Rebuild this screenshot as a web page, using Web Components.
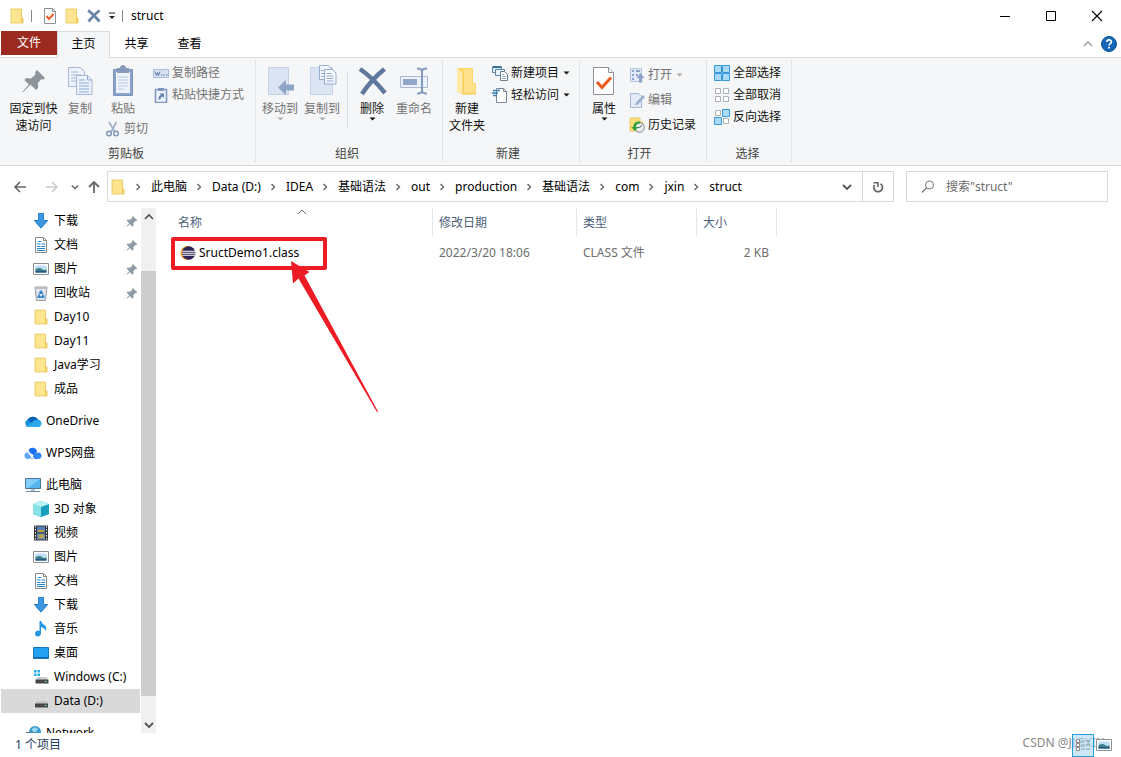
<!DOCTYPE html>
<html lang="zh-CN">
<head>
<meta charset="utf-8">
<title>struct</title>
<style>
  html, body { height: 100%; margin: 0; }
  body { font: 12px/16px "Noto Sans", "Noto Sans CJK SC", sans-serif; color: #000; background: #fff; overflow: hidden; }
</style>
</head>
<body>
<file-explorer></file-explorer>
<script>
const ICONS = {
  folder: [16, 16, '<path d="M2 1h9.500v10h2.500v4H2z" fill="#f6dc7c"/><path d="M2 1h11v14H2z" fill="#fde58f"/><path d="M12 10h2v5h-2z" fill="#f3cf57"/><path d="M2 1h10.500v9H14V15H2z" fill="none" stroke="#e6c458" stroke-width=".8"/>'],
  check: [16, 16, '<path d="M2.500.5h8l3 3v12h-11z" fill="#fff" stroke="#8a8f98"/><path d="M10.500.5v3h3" fill="none" stroke="#8a8f98"/><path d="M4.500 8l2.500 3 4.500-5" fill="none" stroke="#e4622a" stroke-width="2"/>'],
  cross: [16, 16, '<path d="M2 2.500Q6 5 13.500 13.500M13.500 2.500Q9 6 2.500 13.500" fill="none" stroke="#6d84a8" stroke-width="2.800"/>'],
  custom: [8, 8, '<path d="M1 1h6" stroke="#222"/><path d="M1 4h6L4 7z" fill="#222"/>'],
  tri: [7, 4, '<path d="M.5.5h6l-3 3z" fill="currentColor"/>'],
  min: [12, 12, '<path d="M1 6.500h10" stroke="#000"/>'],
  max: [12, 12, '<path d="M1.500 1.500h9v9h-9z" fill="none" stroke="#000"/>'],
  close: [12, 12, '<path d="M1 1l10 10M11 1L1 11" stroke="#000" stroke-width="1.100"/>'],
  up: [10, 10, '<path d="M1 7l4-4 4 4" fill="none" stroke="currentColor" stroke-width="1.600"/>'],
  down: [10, 10, '<path d="M1 3l4 4 4-4" fill="none" stroke="currentColor" stroke-width="1.800"/>'],
  sort: [10, 6, '<path d="M1 5l4-4 4 4" fill="none" stroke="#666"/>'],
  sep: [7, 8, '<path d="M1.500 1l3 3-3 3" fill="none" stroke="#666" stroke-width="1.400"/>'],
  help: [16, 16, '<circle cx="8" cy="8" r="7.500" fill="#1568b8" stroke="#0d509a"/><path d="M5.800 6.100c0-3 4.600-2.900 4.600-.2 0 1.800-2.300 1.700-2.300 3.600" fill="none" stroke="#fff" stroke-width="1.700"/><path d="M7.200 10.800h1.800v1.800H7.200z" fill="#fff"/>'],
  pinbig: [32, 32, '<path d="M19 5l8 8-1.800 1.700-1.700-.6-3.700 4.100.4 4.600-2.200 2.200-5.400-5.300-7.400 7.200L4 27.200l7-7.600-4.700-4.600 2-2 4.700.4 4.500-3.800-.4-2.500z" fill="#8d949b"/>'],
  copy: [32, 32, '<g fill="#eef3fb" stroke="#a5b6d6"><path d="M4.500 2.500h12l4 4v15h-16z"/><path d="M7 7h7M7 10h10M7 13h10M7 16h10"/><path d="M12.500 10.500h11l4.500 4.500v14.500H12.500z"/><path d="M23.500 10.500V15H28M15 15h6M15 18h10M15 21h10M15 24h10M15 27h10" fill="none" stroke="#8ea8d4"/></g>'],
  paste: [32, 32, '<path d="M6.500 4.500h19v26h-19z" fill="#8ba2c9" stroke="#7c93bb"/><path d="M9 7h14v21H9z" fill="#eef3fb"/><path d="M10 3h3c0-4 6-4 6 0h3v5H10z" fill="#8799b8"/><path d="M11 12h10M11 15h10M11 18h10M11 21h10M11 24h6" stroke="#bccae2"/>'],
  cut: [16, 16, '<path d="M4 1l6 10M11.500 1L6 11" stroke="#a0b0cc" stroke-width="1.600"/><circle cx="4" cy="12.500" r="2.300" fill="none" stroke="#8296ba" stroke-width="1.500"/><circle cx="11" cy="12.500" r="2.300" fill="none" stroke="#8296ba" stroke-width="1.500"/>'],
  path: [16, 16, '<path d="M.5 4.500h15v8H.5z" fill="#d8e3f4" stroke="#abbcd8"/><path d="M2 6.500l1.500 4 1-3 1 3 1.500-4" fill="none" stroke="#5c76a4"/><path d="M8 10h1.500M10.500 10H12M13 10h1.500" stroke="#5c76a4"/>'],
  shortcut: [16, 16, '<path d="M2.500 2.500h11v13h-11z" fill="#eef3fb" stroke="#8399c0" stroke-width="1.600"/><path d="M5 1h6v3H5z" fill="#8296ba"/><path d="M5.500 12.500c0-3 1-4 2.500-4.500L6.500 6.500H11V11L9.500 9.500c-1.500.5-2 1.500-2 3z" fill="#6480b2"/>'],
  moveto: [32, 32, '<path d="M4.500 2.500h20v27h-20z" fill="#dae4f2" stroke="#c5d2e7"/><path d="M14 22.500l8-7.500v4.500h8v6h-8V30z" fill="#8ea4c6"/>'],
  copyto: [32, 32, '<path d="M4.500 2.500h22v27h-22z" fill="#dae4f2" stroke="#c5d2e7"/><g fill="#f4f7fc" stroke="#96abd0"><path d="M13.500.5h9l3 3v11h-12z"/><path d="M18.500 4.500h8l3.500 3.500v11H18.500z"/><path d="M20.500 8.500h5M20.500 11h7M20.500 13.500h7M20.500 16h7M15 5.500h3M15 8.500h3M15 11.500h3"/></g>'],
  delete: [32, 32, '<path d="M4 4Q17 13 29 28M28.500 4Q15 15 6 29" fill="none" stroke="#60779d" stroke-width="4.500"/>'],
  rename: [32, 32, '<path d="M2.500 11.500h27v11h-27z" fill="#eef3fb" stroke="#a9b9d4"/><path d="M5 14h14v6H5z" fill="#90a6ca"/><path d="M19 3.500q5 0 5 3v19q0 3-5 3M29 3.500q-5 0-5 3v19q0 3 5 3" fill="none" stroke="#8298bd" stroke-width="2"/>'],
  newfolder: [32, 32, '<path d="M6 3h16v15h3v11H12z" fill="#fbd76b"/><path d="M13 4h8v15h3v9H13z" fill="#ffe08a"/><path d="M6 3l6 5v22l-6-3z" fill="#ffe9a6"/><path d="M12 8v21.500M12 29h13" fill="none" stroke="#f0c755"/>'],
  newitem: [16, 16, '<path d="M.5 1.500h9v6h-9z" fill="#d9edf8" stroke="#60849e"/><path d="M1 2h8" stroke="#397298" stroke-width="2"/><path d="M3.500 4.500h9v6h-9z" fill="#e8f4fb" stroke="#60849e"/><path d="M8.500 6.500h4l3 3v6h-7z" fill="#fff" stroke="#6c7d90"/><path d="M10 9.500h2M10 11.500h4M10 13.500h4" stroke="#9aacbe"/>'],
  easy: [16, 16, '<path d="M4.500 1.500h7l3 3v11h-10z" fill="#fff" stroke="#7a8796"/><path d="M11.500 1.500v3h3" fill="none" stroke="#7a8796"/><path d="M1 3.500h7M0 6h6M1 8.500h4" stroke="#397fb1" stroke-width="1.300"/>'],
  properties: [32, 32, '<path d="M5.500 2.500h15l5 5v22h-20z" fill="#fff" stroke="#8c9198"/><path d="M20.500 2.500v5h5" fill="#eee" stroke="#8c9198"/><path d="M9 17l5 5.500 9-10" fill="none" stroke="#eb5a1c" stroke-width="3"/>'],
  open: [16, 16, '<path d="M1.500 1.500h11v13h-11z" fill="#e2ebf7" stroke="#b6c5de"/><path d="M3 3h2v2H3zM3 7h2v2H3zM3 11h2v2H3zM7 3h4v2H7zM7 7h2v2H7z" fill="#8ba1c7"/><path d="M11.500 6l4 5h-2.300v4.500H10V11H7.500z" fill="#8ba1c7"/>'],
  edit: [16, 16, '<path d="M1.500 1.500h8l3 3v11h-11z" fill="#e2ebf7" stroke="#a6b9d6"/><path d="M6 13.500l1-3 7-7.500 2 2-7 7.500z" fill="#9cb0d0"/>'],
  history: [16, 16, '<path d="M1 1h10v4h3v9H1z" fill="#fbdf79" stroke="#e1bf4d" stroke-width=".8"/><circle cx="10.500" cy="10.500" r="4.800" fill="#e9edf0" stroke="#7d878f"/><path d="M10.500 10.500l2.500-2M10.500 10.500H8" stroke="#4e5962"/><path d="M11 4.500C6 4 4 7 4.500 10H2l4 4 3.500-4H7c0-2 1-3.500 4-3.500z" fill="#37a03c"/>'],
  selall: [16, 16, '<path d="M.5.500h7v7h-7zM8.500.5h7v7h-7zM.5 8.500h7v7h-7zM8.500 8.500h7v7h-7z" fill="#a9dbf8" stroke="#3498dc"/>'],
  selnone: [16, 16, '<path d="M1.500 1.500h5v5h-5zM9.500 1.500h5v5h-5zM1.500 9.500h5v5h-5zM9.500 9.500h5v5h-5z" fill="#fff" stroke="#aeb2b7"/>'],
  selinv: [16, 16, '<path d="M1.500 1.500h5v5h-5zM9.500 9.500h5v5h-5z" fill="#fff" stroke="#aeb2b7"/><path d="M8.500.5h7v7h-7zM.5 8.500h7v7h-7z" fill="#a9dbf8" stroke="#3498dc"/>'],
  back: [16, 16, '<path d="M14 8H3M8 3L3 8l5 5" fill="none" stroke="currentColor" stroke-width="1.600"/>'],
  forward: [16, 16, '<path d="M2 8h11M8 3l5 5-5 5" fill="none" stroke="currentColor" stroke-width="1.600"/>'],
  upward: [16, 16, '<path d="M8 14V3M3 8l5-5 5 5" fill="none" stroke="currentColor" stroke-width="1.800"/>'],
  refresh: [16, 16, '<path d="M10.500 4.800A4.300 4.300 0 1 1 4.600 6" fill="none" stroke="#666" stroke-width="1.700"/><path d="M3.500 3.800H8V8" fill="none" stroke="#666" stroke-width="1.600"/>'],
  search: [16, 16, '<circle cx="9.500" cy="6" r="4" fill="none" stroke="#777"/><path d="M6.500 9L2 13.500" stroke="#777" stroke-width="1.200"/>'],
  pin: [12, 12, '<path d="M7 1l4.200 4.200-1 1-.8-.2-2 2.200.2 2.300-1.200 1.200-2.600-2.700L1.300 11.500.6 11l2.500-2.800L.6 5.600 1.700 4.500 4 4.700l2.300-2-.2-.9z" fill="#8f9ca8"/>'],
  download: [16, 16, '<path d="M5 0h6v7h4.500L8 15.500.5 7H5z" fill="#3c97e2"/><path d="M5.500.5h5v7h4L8 15 1.500 7.500h4z" fill="none" stroke="#2a80cc"/>'],
  doc: [16, 16, '<path d="M2.500.5h8l3 3v12h-11z" fill="#fff" stroke="#85898f"/><path d="M10.500.5v3h3" fill="none" stroke="#85898f"/><path d="M5 4.500h3M4 7h3.500M8.500 7H12M4 9.500h3.500M8.500 9.500H12M4 11.500h8M4 13.500h8" stroke="#2386cc"/>'],
  picture: [16, 16, '<path d="M.5 2.500h15v11H.5z" fill="#fff" stroke="#8b9097"/><path d="M2.500 4.500h11v7h-11z" fill="#b9def5"/><path d="M2.500 8q4-2 6.500 0t4.500 0v3.500h-11z" fill="#417f86"/><path d="M2.500 10h11v1.500h-11z" fill="#245985"/>'],
  recycle: [16, 16, '<path d="M2 2h12l-1.500 13.500h-9z" fill="#dfe4e8" stroke="#949ba2"/><path d="M2 2h12v2H2z" fill="#b8bec4"/><path d="M8 5.500l2 3H6zM4.500 12.500l1.500-3 2 3zM11.500 12.500l-1.500-3-2 3z" fill="#2179c8" stroke="#2179c8" stroke-width=".6"/>'],
  onedrive: [18, 16, '<path d="M4 14a4 4 0 0 1-.3-7.500A6 6 0 0 1 14 6.600 3.900 3.900 0 0 1 14 14z" fill="#1490df"/><path d="M3.700 6.500A6 6 0 0 1 14 6.600L7.500 11z" fill="#0b61b7"/><path d="M2 13l9-6q6-1 6.500 3.500A3.800 3.800 0 0 1 14 14H4z" fill="#2aa8ea"/>'],
  wps: [18, 16, '<path d="M4.500 5A4.600 4.600 0 0 1 13 6.500l-3 4L5.500 7z" fill="#1c6ff0"/><circle cx="4" cy="10.500" r="3.500" fill="#5fa9fa"/><path d="M7 14l4-6q6-2 6.500 2.500A3.500 3.500 0 0 1 14 14z" fill="#3285f5"/><path d="M4 7l6 7" stroke="#fff" stroke-width="1.200"/>'],
  pc: [16, 16, '<path d="M.5 1.500h15v10H.5z" fill="#54b4ef" stroke="#4b7898"/><path d="M1 2h14L3 11H1z" fill="#83cef8"/><path d="M6 12h4v2H6z" fill="#b6c3cc"/><path d="M1 14.500h14" stroke="#6b8ba0"/>'],
  cube: [16, 16, '<path d="M8 0l8 3v10l-8 3-8-3V3z" fill="#3bb9cf"/><path d="M0 3l8 3v10l-8-3z" fill="#88e3e8"/><path d="M8 6l8-3v10l-8 3z" fill="#19a0bf"/><path d="M0 3l8-3 8 3-8 3z" fill="#b8f2f2"/>'],
  video: [16, 16, '<path d="M1 .5h14v15H1z" fill="#33363b"/><path d="M4 1.500h8v6H4z" fill="#547fb7"/><path d="M4 8.500h8v6H4z" fill="#7090b4"/><path d="M5 5h6v2H5zM6 10l4-1 1 4H6z" fill="#c1a13b"/><path d="M2.500 1v15M13.500 1v15" stroke="#eee" stroke-dasharray="1.500 1.500"/>'],
  music: [16, 16, '<path d="M6.500 0H8q1 3 4 4.500 2 2 .5 5.500Q12 7 8 6v6.500a3 3 0 1 1-1.500-2.500z" fill="#2397e5"/>'],
  desktop: [16, 16, '<path d="M.5 2.500h15v11H.5z" fill="#22a0f2" stroke="#1475ba"/><path d="M1 12.500h14" stroke="#0b67ad"/>'],
  cdrive: [16, 16, '<path d="M1 1h2.500v2.500H1zM4.500 1H7v2.500H4.500zM1 4.500h2.500V7H1zM4.500 4.500H7V7H4.500z" fill="#20aeea"/><path d="M4 8h10l1 3H3z" fill="#c9cdd0"/><path d="M2.500 10.500h13v4h-13z" fill="#42464a"/><path d="M11.500 12.500h2" stroke="#5fe465"/>'],
  ddrive: [16, 16, '<path d="M4 8h10l1 3H2z" fill="#bfc3c6"/><path d="M2 10.500h13v4H2z" fill="#42464a"/><path d="M11.500 12.500h2" stroke="#5fe465"/>'],
  network: [16, 16, '<circle cx="10" cy="7" r="6" fill="#3d9bce"/><path d="M7 4q3-3 6 0l-2 3H8z" fill="#9bd8f0"/><path d="M0 8h9v6H0z" fill="#4eb2ec"/><path d="M1 7.500h8" stroke="#5c7f96"/>'],
  eclipse: [16, 16, '<circle cx="7.500" cy="8" r="7" fill="#f29a28"/><circle cx="8.700" cy="8" r="6.700" fill="#2c2255"/><path d="M2.300 6.200h12.700M2 8.200h13.200M2.300 10.200h12.700" stroke="#fff" stroke-width="1.100"/>'],
  details: [16, 16, '<path d="M1.500 2.500h3v3h-3zM1.500 6.500h3v3h-3zM1.500 10.500h3v3h-3z" fill="#fff" stroke="#8e8583"/><path d="M6 4h4M11 4h4M6 8h4M11 8h4M6 12h4M11 12h4" stroke="#8d9aa3"/>']
};

// Registers an element whose shadow root is cloned from a template.
const define = (tag, markup, setup) => {
  const template = document.createElement('template');
  template.innerHTML = markup;
  customElements.define(tag, class extends HTMLElement {
    constructor() {
      super();
      this.attachShadow({ mode: 'open' }).append(template.content.cloneNode(true));
    }
    connectedCallback() { if (setup) setup(this, this.shadowRoot); }
  });
};

const RESET = `:host,*{box-sizing:border-box} button{font:inherit;color:inherit;background:none;border:0;padding:0;margin:0} a{color:inherit;text-decoration:none}`;

define('ui-icon', `<style>:host{display:inline-flex;flex:none} svg{display:block}</style><span></span>`, (host, root) => {
  const [w, h, body] = ICONS[host.getAttribute('name')];
  const size = Number(host.getAttribute('size')) || w;
  root.querySelector('span').innerHTML = `<svg aria-hidden="true" width="${size}" height="${Math.round(size * h / w)}" viewBox="0 0 ${w} ${h}">${body}</svg>`;
});

define('title-bar', `<style>${RESET}
  :host{display:flex;align-items:center;height:31px;padding:0 1px 0 9px}
  .quick{display:flex;align-items:center;gap:6px;flex:1}
  .bar{width:1px;height:12px;background:#888}
  h1{font:inherit;margin:0 0 0 2px}
  button{display:flex;align-items:center;justify-content:center}
  .first{margin-left:4px}
  .win{width:46px;height:30px}
</style>
<div class="quick">
  <ui-icon name="folder"></ui-icon><span class="bar"></span>
  <button class="first" aria-label="属性"><ui-icon name="check"></ui-icon></button>
  <button aria-label="新建文件夹"><ui-icon name="folder"></ui-icon></button>
  <button aria-label="删除"><ui-icon name="cross"></ui-icon></button>
  <button aria-label="自定义"><ui-icon name="custom"></ui-icon></button>
  <span class="bar"></span><h1>struct</h1>
</div>
<button class="win" aria-label="最小化"><ui-icon name="min"></ui-icon></button>
<button class="win" aria-label="最大化"><ui-icon name="max"></ui-icon></button>
<button class="win" aria-label="关闭"><ui-icon name="close"></ui-icon></button>`);

define('ribbon-tabs', `<style>${RESET}
  :host{display:flex;height:27px;border-bottom:1px solid #dadbdc;padding-left:1px}
  nav{display:flex;flex:1}
  button{width:53px;height:26px}
  .file{width:56px;height:24px;background:#9b2a20;color:#fff}
  .on{height:27px;background:#f5f6f7;border:1px solid #dadbdc;border-bottom:0;padding-bottom:2px}
  .end{display:flex;align-items:center;gap:8px;padding-right:4px;color:#aaa}
  .end button{width:auto;height:auto;display:flex}
</style>
<nav><button class="file">文件</button><button class="on">主页</button><button>共享</button><button>查看</button></nav>
<div class="end"><button aria-label="折叠功能区"><ui-icon name="up"></ui-icon></button><button aria-label="帮助"><ui-icon name="help"></ui-icon></button></div>`);

define('ribbon-button', `<style>${RESET}
  :host{display:block;color:#111}
  :host([off]){color:#737373}
  button,button:disabled{display:flex;align-items:center;width:100%;white-space:nowrap;color:inherit}
  .icon{display:flex}
  :host([big]) button{flex-direction:column;padding-top:4px}
  :host([big]) .text{line-height:17px;text-align:center;padding-top:3px;white-space:pre-line}
  :host(:not([big])) button{height:22px;gap:3px}
  :host([loose]) button{height:25px}
  :host([off]) .tri{color:#aaa}
  .tri{margin-left:1px}
  :host([big]) .tri{margin:0}
</style><button><span class="icon"></span><span class="text"><slot></slot></span></button>`, (host, root) => {
  const button = root.querySelector('button');
  root.querySelector('.icon').innerHTML = `<ui-icon name="${host.getAttribute('icon')}"></ui-icon>`;
  if (host.hasAttribute('menu')) button.insertAdjacentHTML('beforeend', '<ui-icon class="tri" name="tri"></ui-icon>');
  button.disabled = host.hasAttribute('off');
});

define('ribbon-group', `<style>${RESET}
  :host{display:flex;flex-direction:column;flex:none;border-right:1px solid #e2e3e4;padding:0 10px 0 3px}
  .body{display:flex;flex:1}
  .label{text-align:center;color:#444;line-height:16px}
</style><div class="body"><slot></slot></div><div class="label"></div>`, (host, root) => {
  root.querySelector('.label').textContent = host.getAttribute('label');
});

define('ribbon-bar', `<style>${RESET}
  :host{display:flex;height:108px;background:#f5f6f7;border-bottom:1px solid #dadbdc;padding:3px 0}
  [big]{width:42px}
  .wide{width:51px}
  .col{display:flex;flex-direction:column;padding-top:1px}
  .clip{display:flex;flex-direction:column}
  .clip [big]{width:44px}
  .cut{margin:1px 0 0 4px}
  .rule{width:1px;height:58px;margin:10px 3px 0 4px;background:#dcdde0}
  .side{margin-left:4px}
  .far{margin-left:5px}
  .clipboard{padding:0 11px 0 8px}
  .organize{padding-right:7px}
  .new{padding-right:9px}
  .select{padding-left:7px}
</style>
<ribbon-group class="clipboard" label="剪贴板">
  <ribbon-button big class="wide" icon="pinbig">固定到快
速访问</ribbon-button>
  <ribbon-button big off icon="copy">复制</ribbon-button>
  <div class="clip"><ribbon-button big off icon="paste">粘贴</ribbon-button><ribbon-button class="cut" off icon="cut">剪切</ribbon-button></div>
  <div class="col far"><ribbon-button off icon="path">复制路径</ribbon-button><ribbon-button off icon="shortcut">粘贴快捷方式</ribbon-button></div>
</ribbon-group>
<ribbon-group class="organize" label="组织">
  <ribbon-button big off menu icon="moveto">移动到</ribbon-button>
  <ribbon-button big off menu icon="copyto">复制到</ribbon-button>
  <span class="rule"></span>
  <ribbon-button big menu icon="delete">删除</ribbon-button>
  <ribbon-button big off icon="rename">重命名</ribbon-button>
</ribbon-group>
<ribbon-group class="new" label="新建">
  <ribbon-button big icon="newfolder">新建
文件夹</ribbon-button>
  <div class="col side"><ribbon-button menu icon="newitem">新建项目</ribbon-button><ribbon-button menu icon="easy">轻松访问</ribbon-button></div>
</ribbon-group>
<ribbon-group label="打开">
  <ribbon-button big menu icon="properties">属性</ribbon-button>
  <div class="col side"><ribbon-button loose off menu icon="open">打开</ribbon-button><ribbon-button loose off icon="edit">编辑</ribbon-button><ribbon-button loose icon="history">历史记录</ribbon-button></div>
</ribbon-group>
<ribbon-group class="select" label="选择">
  <div class="col"><ribbon-button icon="selall">全部选择</ribbon-button><ribbon-button icon="selnone">全部取消</ribbon-button><ribbon-button icon="selinv">反向选择</ribbon-button></div>
</ribbon-group>`);

define('address-bar', `<style>${RESET}
  :host{display:flex;align-items:center;height:42px;padding:0 13px 1px 12px;color:#666}
  button{display:flex;align-items:center;justify-content:center}
  .nav{display:flex;align-items:center;width:95px;padding-right:5px;justify-content:space-between}
  .forward{color:#ccc;padding-left:9px}
  .recent{padding-left:4px}
  .box{display:flex;align-items:center;height:31px;border:1px solid #d9d9d9;flex:1;min-width:0;color:#000;padding-left:2px}
  ol{display:flex;list-style:none;margin:0;padding:0;flex:1}
  li{display:flex;align-items:center;white-space:nowrap}
  li ui-icon{margin:0 9px}
  .box button{width:31px;height:29px;color:#555}
  .box .refresh{border-left:1px solid #d9d9d9}
  label{display:flex;align-items:center;gap:10px;width:202px;height:31px;margin-left:12px;padding-left:13px;border:1px solid #d9d9d9}
  input{font:inherit;flex:1;min-width:0;border:0;padding:0;outline:0;background:none}
  input::placeholder{color:#6d6d6d;opacity:1}
</style>
<div class="nav">
  <button aria-label="后退"><ui-icon name="back"></ui-icon></button>
  <button class="forward" aria-label="前进"><ui-icon name="forward"></ui-icon></button>
  <button class="recent" aria-label="最近"><ui-icon name="down" size="8"></ui-icon></button>
  <button aria-label="上移"><ui-icon name="upward"></ui-icon></button>
</div>
<div class="box"><ui-icon name="folder"></ui-icon><ol></ol>
  <button aria-label="历史"><ui-icon name="down"></ui-icon></button>
  <button class="refresh" aria-label="刷新"><ui-icon name="refresh"></ui-icon></button></div>
<label aria-label="搜索"><ui-icon name="search"></ui-icon><input type="search" placeholder='搜索"struct"'></label>`, (host, root) => {
  root.querySelector('ol').innerHTML = ['此电脑', 'Data (D:)', 'IDEA', '基础语法', 'out', 'production', '基础语法', 'com', 'jxin', 'struct']
    .map(name => `<li><ui-icon name="sep"></ui-icon><a href="#">${name}</a></li>`).join('');
});

define('nav-item', `<style>${RESET}
  :host{display:block;flex:none}
  a{display:flex;align-items:center;gap:5px;height:24px;padding:0 2px 0 32px;margin-left:1px;white-space:nowrap}
  :host([root]) a{padding-left:24px}
  :host([root]){margin-top:8px}
  :host([selected]) a{background:#d9d9d9}
  .text{flex:1}
  .mark{display:flex;width:16px;justify-content:center}
</style><a href="#"><span class="mark"></span><span class="text"><slot></slot></span></a>`, (host, root) => {
  root.querySelector('.mark').innerHTML = `<ui-icon name="${host.getAttribute('icon')}"></ui-icon>`;
  if (host.hasAttribute('pinned')) root.querySelector('a').insertAdjacentHTML('beforeend', '<ui-icon name="pin"></ui-icon>');
});

define('nav-pane', `<style>${RESET}
  :host{display:flex;width:157px;min-height:0;flex:none}
  .tree{display:flex;flex-direction:column;width:140px;margin-right:1px;padding-top:1px;overflow:hidden}
  .scroll{display:flex;flex-direction:column;width:15px;background:#f0f0f0}
  .scroll button{display:flex;align-items:center;justify-content:center;height:17px;color:#505050}
  .before{flex:46}
  .thumb{background:#cdcdcd;flex:425}
  .after{flex:20}
</style>
<div class="tree">
  <nav-item icon="download" pinned>下载</nav-item><nav-item icon="doc" pinned>文档</nav-item>
  <nav-item icon="picture" pinned>图片</nav-item><nav-item icon="recycle" pinned>回收站</nav-item>
  <nav-item icon="folder">Day10</nav-item><nav-item icon="folder">Day11</nav-item>
  <nav-item icon="folder">Java学习</nav-item><nav-item icon="folder">成品</nav-item>
  <nav-item root icon="onedrive">OneDrive</nav-item><nav-item root icon="wps">WPS网盘</nav-item>
  <nav-item root icon="pc">此电脑</nav-item>
  <nav-item icon="cube">3D 对象</nav-item><nav-item icon="video">视频</nav-item>
  <nav-item icon="picture">图片</nav-item><nav-item icon="doc">文档</nav-item>
  <nav-item icon="download">下载</nav-item><nav-item icon="music">音乐</nav-item>
  <nav-item icon="desktop">桌面</nav-item><nav-item icon="cdrive">Windows (C:)</nav-item>
  <nav-item icon="ddrive" selected>Data (D:)</nav-item><nav-item root icon="network">Network</nav-item>
</div>
<div class="scroll"><button aria-label="向上滚动"><ui-icon name="up"></ui-icon></button><span class="before"></span><span class="thumb"></span><span class="after"></span><button aria-label="向下滚动"><ui-icon name="down"></ui-icon></button></div>`);

define('file-list', `<style>${RESET}
  :host{display:block;position:relative;flex:1;min-width:0;padding-left:4px}
  table{border-collapse:separate;border-spacing:0;table-layout:fixed;width:616px}
  .c-name{width:272px} .c-date{width:144px} .c-type{width:120px} .c-size{width:80px}
  th{font-weight:normal;text-align:left;height:29px;padding:0 0 0 6px;border-right:1px solid #e5e5e5;color:#4c607a;position:relative}
  th:first-child,td:first-child{padding-left:17px}
  td{height:32px;padding:0 8px 0 6px;color:#6d6d6d}
  .size{text-align:right}
  .sort{position:absolute;top:1px;left:136px}
  .name{display:flex;align-items:center;gap:3px;color:#000;padding-left:2px}
  .target{position:relative}
  .frame{position:absolute;left:10px;top:0;width:156px;height:33px;border:4px solid #ed1c24;border-radius:2px}
  .arrow{position:absolute;left:130px;top:24px}
</style>
<table>
  <colgroup><col class="c-name"><col class="c-date"><col class="c-type"><col class="c-size"></colgroup>
  <thead><tr><th>名称<ui-icon class="sort" name="sort"></ui-icon></th><th>修改日期</th><th>类型</th><th>大小</th></tr></thead>
  <tbody><tr><td class="target"><a class="name" href="#"><ui-icon name="eclipse"></ui-icon>SructDemo1.class</a>
    <span class="frame"></span>
    <svg class="arrow" width="88" height="152" viewBox="0 0 88 152" aria-hidden="true"><path d="M0 0L18.500 11 13.500 14.500 87 150.500 86 151 7.500 17.500 2 22.500z" fill="#ed1c24"/></svg></td>
    <td>2022/3/20 18:06</td><td>CLASS 文件</td><td class="size">2 KB</td></tr></tbody>
</table>`);

define('status-bar', `<style>${RESET}
  :host{display:flex;align-items:center;justify-content:space-between;position:relative;height:24px;padding:0 7px 0 15px;color:#1f3a5f}
  .views{display:flex;position:relative}
  button{display:flex;align-items:center;justify-content:center;width:20px;height:23px}
  .on{width:22px;background:rgb(176 220 244 / .65);border:1px solid #26a0da}
  .mark{position:absolute;right:16px;top:2px;color:#888}
</style>
<span>1 个项目</span>
<span class="mark">CSDN @JLEXIN</span>
<span class="views"><button class="on" aria-label="详细信息"><ui-icon name="details"></ui-icon></button><button aria-label="大图标"><ui-icon name="picture"></ui-icon></button></span>`);

define('file-explorer', `<style>
  :host{display:flex;flex-direction:column;height:100vh}
  main{display:flex;flex:1;min-height:0}
</style>
<title-bar></title-bar><ribbon-tabs></ribbon-tabs><ribbon-bar></ribbon-bar><address-bar></address-bar>
<main><nav-pane></nav-pane><file-list></file-list></main><status-bar></status-bar>`);
</script>
</body>
</html>
